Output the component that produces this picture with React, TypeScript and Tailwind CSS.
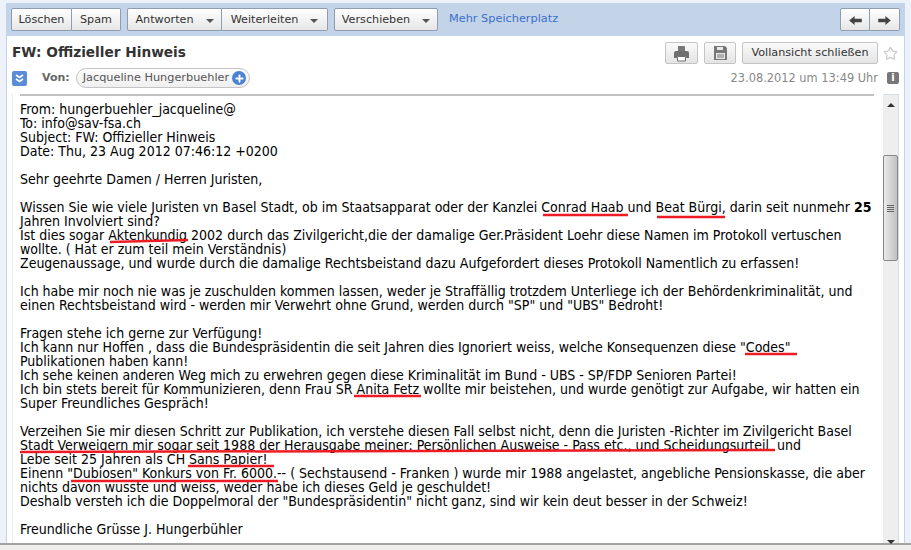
import { Plus, Star } from 'lucide-react';

const lines: React.ReactNode[] = [
  'From: hungerbuehler_jacqueline@',
  'To: info@sav-fsa.ch',
  'Subject: FW: Offizieller Hinweis',
  'Date: Thu, 23 Aug 2012 07:46:12 +0200',
  '',
  'Sehr geehrte Damen / Herren Juristen,',
  '',
  <>Wissen Sie wie viele Juristen vn Basel Stadt, ob im Staatsapparat oder der Kanzlei Conrad Haab und Beat Bürgi, darin seit nunmehr <b>25</b></>,
  'Jahren Involviert sind?',
  'Ist dies sogar Aktenkundig 2002 durch das Zivilgericht,die der damalige Ger.Präsident Loehr diese Namen im Protokoll vertuschen',
  'wollte. ( Hat er zum teil mein Verständnis)',
  'Zeugenaussage, und wurde durch die damalige Rechtsbeistand dazu Aufgefordert dieses Protokoll Namentlich zu erfassen!',
  '',
  'Ich habe mir noch nie was je zuschulden kommen lassen, weder je Straffällig trotzdem Unterliege ich der Behördenkriminalität, und',
  'einen Rechtsbeistand wird - werden mir Verwehrt ohne Grund, werden durch "SP" und "UBS" Bedroht!',
  '',
  'Fragen stehe ich gerne zur Verfügung!',
  'Ich kann nur Hoffen , dass die Bundespräsidentin die seit Jahren dies Ignoriert weiss, welche Konsequenzen diese "Codes"',
  'Publikationen haben kann!',
  'Ich sehe keinen anderen Weg mich zu erwehren gegen diese Kriminalität im Bund - UBS - SP/FDP Senioren Partei!',
  'Ich bin stets bereit für Kommunizieren, denn Frau SR Anita Fetz wollte mir beistehen, und wurde genötigt zur Aufgabe, wir hatten ein',
  'Super Freundliches Gespräch!',
  '',
  'Verzeihen Sie mir diesen Schritt zur Publikation, ich verstehe diesen Fall selbst nicht, denn die Juristen -Richter im Zivilgericht Basel',
  'Stadt Verweigern mir sogar seit 1988 der Herausgabe meiner: Persönlichen Ausweise - Pass etc., und Scheidungsurteil  und',
  'Lebe seit 25 Jahren als CH Sans Papier!',
  'Einenn "Dubiosen" Konkurs von Fr. 6000.-- ( Sechstausend - Franken ) wurde mir 1988 angelastet, angebliche Pensionskasse, die aber',
  'nichts davon wusste und weiss, weder habe ich dieses Geld je geschuldet!',
  'Deshalb versteh ich die Doppelmoral der "Bundespräsidentin" nicht ganz, sind wir kein deut besser in der Schweiz!',
  '',
  'Freundliche Grüsse J. Hungerbühler',
];

const btn = 'h-[23px] shrink-0 pt-[2px] flex items-center justify-center border border-[#8f9db3] bg-gradient-to-b from-white to-[#e6e6e6] text-[11.2px] text-[#333]';
const grayBtn = 'h-[22px] flex items-center justify-center rounded-[2px] border border-[#c4c4c4] bg-gradient-to-b from-[#fafafa] to-[#e4e4e4] text-[11.2px] text-[#333]';

function Caret() {
  return <span className="ml-3 h-0 w-0 border-x-[4px] border-t-[4px] border-x-transparent border-t-[#555]" />;
}

export default function App() {
  return (
    <div className="h-[550px] w-[911px] overflow-hidden bg-[#edf1fa] font-['DejaVu_Sans',sans-serif] flex flex-col">
      <div className="h-[543px] shrink-0 pt-[3px] pl-[6px] pr-[6px]">
        <div className="h-[540px] bg-white border-x border-[#c3d4e9] flex flex-col">
          {/* Toolbar */}
          <div className="h-[33px] shrink-0 bg-[#c3d4e9] pl-[4px] pr-[4px] flex items-center">
            <button className={`${btn} w-[61px] rounded-l-[2px]`}>Löschen</button>
            <button className={`${btn} w-[49px] rounded-r-[2px] border-l-0`}>Spam</button>
            <button className={`${btn} ml-[6px] w-[95px] rounded-l-[2px]`}>Antworten<Caret /></button>
            <button className={`${btn} w-[106px] rounded-r-[2px] border-l-0`}>Weiterleiten<Caret /></button>
            <button className={`${btn} ml-[6px] w-[104px] rounded-[2px]`}>Verschieben<Caret /></button>
            <span className="ml-[11px] text-[11.3px] text-[#3d6fc9]">Mehr Speicherplatz</span>
            <div className="ml-auto flex">
              <button className={`${btn} w-[30px] rounded-l-[2px] pt-0`}>
                <svg width="13" height="9" viewBox="0 0 14 10"><path d="M0 5 L6 0 V3 H14 V7 H6 V10 Z" fill="#444" /></svg>
              </button>
              <button className={`${btn} w-[30px] rounded-r-[2px] border-l-0 pt-0`}>
                <svg width="13" height="9" viewBox="0 0 14 10"><path d="M14 5 L8 0 V3 H0 V7 H8 V10 Z" fill="#444" /></svg>
              </button>
            </div>
          </div>

          {/* Header */}
          <div className="h-[58px] shrink-0 pl-[5px] pr-[5px] flex flex-col">
            <div className="h-[31px] flex items-center pt-[3px]">
              <h1 className="text-[13.7px] leading-none font-bold text-[#333]">FW: Offizieller Hinweis</h1>
              <div className="ml-auto flex items-center">
                <button className={`${grayBtn} w-[33px]`}>
                  <svg width="17" height="17" viewBox="0 0 17 17"><path d="M5 1 H11 Q12 1 12 2 V6 H5 Z" fill="#777" /><path d="M1 8 Q1 6 3 6 H14 Q16 6 16 8 V13 H13 V11 H4 V13 H1 Z" fill="#6f6f6f" /><path d="M4.5 11.5 H12.5 V16 H4.5 Z" fill="#fff" stroke="#6f6f6f" /></svg>
                </button>
                <button className={`${grayBtn} ml-[6px] w-[32px]`}>
                  <svg width="15" height="16" viewBox="0 0 15 16"><path d="M1 1 H12 L14 3 V15 H1 Z" fill="#777" /><path d="M4 2 H10 V5 H4 Z" fill="#e8e8e8" /><path d="M3 8 H12 V14 H3 Z" fill="#e8e8e8" /><path d="M4 10 H11 M4 12 H11" stroke="#777" /></svg>
                </button>
                <button className={`${grayBtn} ml-[6px] w-[136px]`}>Vollansicht schließen</button>
                <Star size={15} color="#ccc" className="ml-[5px] mr-[1px]" />
              </div>
            </div>
            <div className="flex items-center h-[22px]">
              <span className="w-[15px] h-[15px] rounded-[2px] bg-[#5b8dd6] flex items-center justify-center">
                <svg width="9" height="9" viewBox="0 0 9 9" fill="none" stroke="white" strokeWidth="1.6"><path d="M1 1 L4.5 3.5 L8 1 M1 5 L4.5 7.5 L8 5" /></svg>
              </span>
              <span className="ml-[15px] text-[11px] font-bold text-[#666]">Von:</span>
              <span className="ml-[6px] h-[20px] w-[174px] rounded-full border border-[#c4c4c4] bg-gradient-to-b from-[#fdfdfd] to-[#efefef] pl-[6px] flex items-center text-[11.3px] text-[#555] whitespace-nowrap">
                Jacqueline Hungerbuehler
                <span className="ml-[3px] w-[14px] h-[14px] rounded-full bg-[#4d82d2] flex items-center justify-center"><Plus size={11} color="white" strokeWidth={4} /></span>
              </span>
              <span className="ml-auto pt-[1px] text-[11.4px] text-[#888]">23.08.2012 um 13:49 Uhr</span>
              <span className="ml-[9px] w-[12px] h-[12px] rounded-[2px] bg-[#777] text-white text-[10px] leading-[12px] font-bold text-center">i</span>
            </div>
          </div>

          {/* Body */}
          <div className="relative flex-1 min-h-0 ml-[5px] mr-[4px] flex">
            <div className="relative flex-1 overflow-hidden border-l border-[#e4e9f2] font-['DejaVu_Sans_Condensed','Noto_Sans',sans-serif] text-[14px] leading-[14px] text-black">
              <div className="ml-[7px] mr-[9px] h-[2px] bg-[#c2c2c2]" />
              <div className="pl-[7px] pt-[6px]">
                {lines.map((l, i) => (
                  <div key={i} className="h-[14px] whitespace-pre">{l}</div>
                ))}
              </div>
              {/* red marker strokes */}
              <svg className="absolute left-[-13px] top-[-94px] pointer-events-none" width="900" height="550">
                <g stroke="#ed1c24" strokeWidth="2.5" fill="none">
                  <line x1="543" y1="215" x2="628" y2="215" />
                  <line x1="657" y1="217" x2="725" y2="217" />
                  <line x1="110" y1="242" x2="188" y2="240" />
                  <line x1="745" y1="354" x2="797" y2="354" />
                  <line x1="354" y1="396" x2="421" y2="396" />
                  <line x1="20" y1="452" x2="775" y2="450" />
                  <line x1="188" y1="466" x2="274" y2="466" />
                  <line x1="71" y1="481" x2="278" y2="481" />
                </g>
              </svg>
            </div>
            <div className="w-[16px] shrink-0 bg-[#eeeeee] border-t border-[#d5dde9] border-r relative flex flex-col items-center">
              <span className="mt-[8px] h-0 w-0 border-x-[4px] border-b-[4px] border-x-transparent border-b-[#333]" />
              <div className="mt-[48px] h-[106px] w-[15px] rounded-[2px] border border-[#888] bg-gradient-to-r from-[#eaeaea] to-[#c0c0c0] flex flex-col items-center justify-center gap-[1px]">
                <span className="block w-[7px] h-px bg-[#666]" />
                <span className="block w-[7px] h-px bg-[#666]" />
                <span className="block w-[7px] h-px bg-[#666]" />
                <span className="block w-[7px] h-px bg-[#666]" />
              </div>
              <span className="mt-auto mb-[-1px] h-0 w-0 border-x-[4px] border-t-[4px] border-x-transparent border-t-[#333]" />
            </div>
            <div className="w-[1px] shrink-0" />
          </div>
        </div>
      </div>
      <div className="flex-1 bg-[#f0eded] border-t-2 border-[#a3a3a3]" />
    </div>
  );
}
